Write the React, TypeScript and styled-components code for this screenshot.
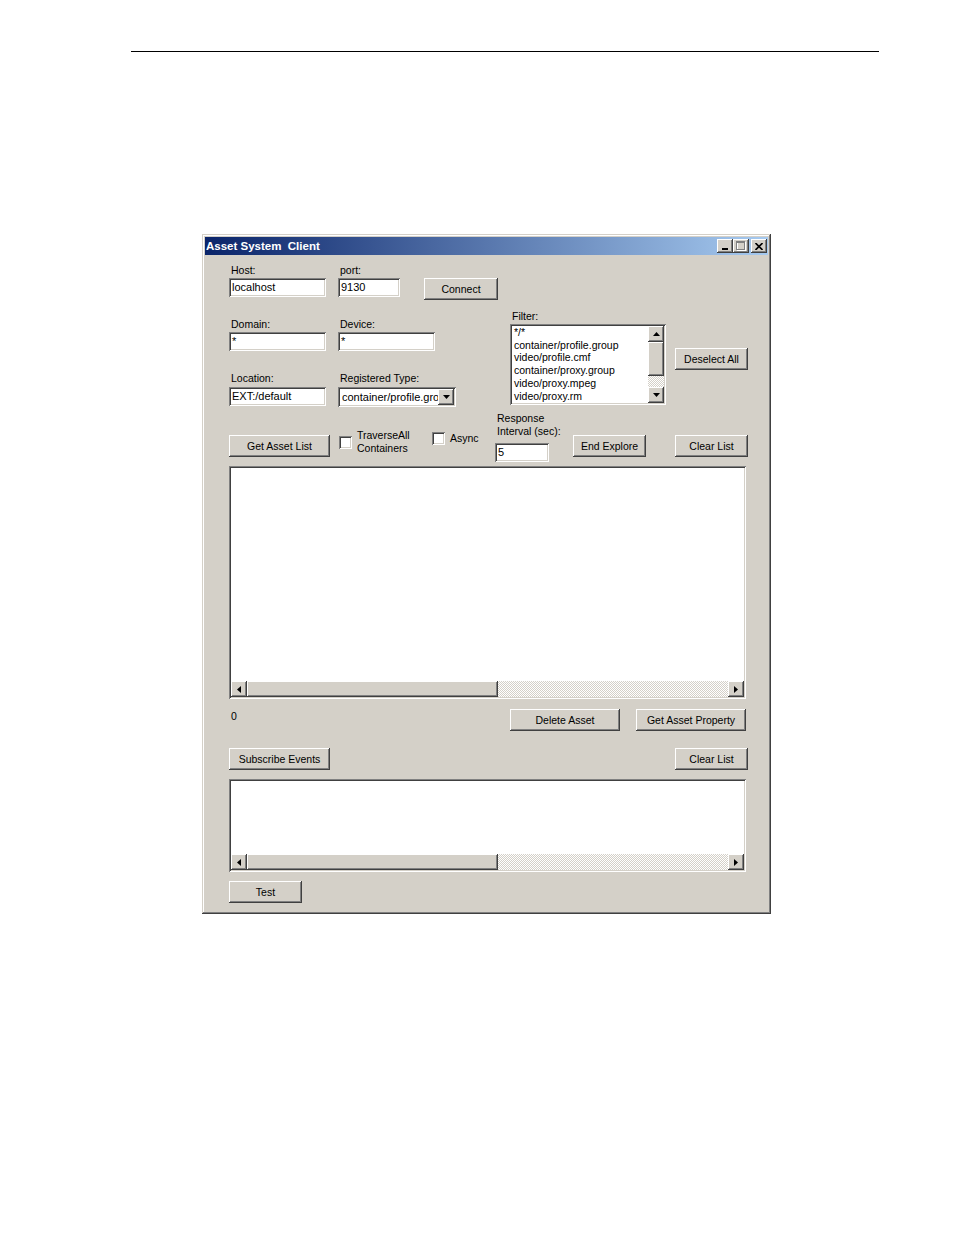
import React from "react";
import styled, { createGlobalStyle } from "styled-components";

const GlobalStyle = createGlobalStyle`
  body {
    margin: 0;
    background: #ffffff;
    font-family: "Liberation Sans", Arial, sans-serif;
  }
`;

const raised =
  "inset -1px -1px #404040, inset 1px 1px #ffffff, inset -2px -2px #808080, inset 2px 2px #d4d0c8";
const sunken =
  "inset 1px 1px #808080, inset -1px -1px #ffffff, inset 2px 2px #404040, inset -2px -2px #d4d0c8";

const Page = styled.div`
  width: 954px;
  height: 1235px;
  padding-top: 51px;
  box-sizing: border-box;
`;

const Rule = styled.div`
  margin-left: 131px;
  width: 748px;
  height: 1px;
  background: #000000;
`;

const Window = styled.div`
  margin: 182px 0 0 202px;
  width: 569px;
  height: 680px;
  box-sizing: border-box;
  padding: 3px;
  background: #d4d0c8;
  box-shadow: inset -1px -1px #404040, inset 1px 1px #d4d0c8,
    inset -2px -2px #808080, inset 2px 2px #ffffff;
  display: flex;
  flex-direction: column;
`;

const TitleBar = styled.div`
  height: 18px;
  display: flex;
  align-items: center;
  padding: 0 1px 0 1px;
  background: linear-gradient(to right, #0a246a, #a6caf0);
`;

const TitleText = styled.span`
  flex: 1;
  color: #ffffff;
  font-weight: bold;
  font-size: 11.5px;
  line-height: 14px;
  padding-bottom: 1px;
  white-space: pre;
`;

const CaptionButton = styled.div<{ $ml?: number }>`
  width: 16px;
  height: 14px;
  margin-left: ${(p) => p.$ml ?? 0}px;
  background: #d4d0c8;
  box-shadow: ${raised};
  display: flex;
  align-items: center;
  justify-content: center;
`;

const Body = styled.div`
  flex: 1;
  padding: 9px 20px 0 24px;
  display: flex;
  flex-direction: column;
  font-size: 10.5px;
  color: #000000;
`;

const TopArea = styled.div`
  display: flex;
  align-items: flex-start;
`;

const LeftCol = styled.div`
  display: flex;
  flex-direction: column;
`;

const FieldRow = styled.div<{ $h?: number }>`
  display: flex;
  align-items: flex-start;
  height: ${(p) => (p.$h ? `${p.$h}px` : "auto")};
`;

const Field = styled.div<{ $w: number; $ml?: number; $mt?: number }>`
  width: ${(p) => p.$w}px;
  margin-left: ${(p) => p.$ml ?? 0}px;
  margin-top: ${(p) => p.$mt ?? 0}px;
  display: flex;
  flex-direction: column;
`;

const Label = styled.div<{ $h?: number }>`
  height: ${(p) => p.$h ?? 14}px;
  line-height: 13px;
  padding-left: 2px;
  white-space: nowrap;
`;

const TextBox = styled.div<{ $h?: number }>`
  height: ${(p) => p.$h ?? 19}px;
  box-sizing: border-box;
  background: #ffffff;
  box-shadow: ${sunken};
  padding: 2px 3px 0 3px;
  font-size: 11px;
  line-height: 15px;
  white-space: nowrap;
  overflow: hidden;
`;

const Combo = styled.div`
  height: 20px;
  box-sizing: border-box;
  background: #ffffff;
  box-shadow: ${sunken};
  padding: 2px;
  display: flex;
`;

const ComboText = styled.div`
  flex: 1;
  padding: 1px 0 0 2px;
  font-size: 11px;
  line-height: 15px;
  white-space: nowrap;
  overflow: hidden;
`;

const Button = styled.div<{ $w: number; $ml?: number; $mt?: number; $mr?: number }>`
  width: ${(p) => p.$w}px;
  height: 22px;
  margin-left: ${(p) => p.$ml ?? 0}px;
  margin-top: ${(p) => p.$mt ?? 0}px;
  margin-right: ${(p) => p.$mr ?? 0}px;
  flex-shrink: 0;
  box-sizing: border-box;
  background: #d4d0c8;
  box-shadow: ${raised};
  display: flex;
  align-items: center;
  justify-content: center;
  white-space: nowrap;
`;

const ArrowBox = styled.div<{ $h?: number }>`
  width: 16px;
  height: ${(p) => p.$h ?? 16}px;
  flex-shrink: 0;
  box-sizing: border-box;
  background: #d4d0c8;
  box-shadow: ${raised};
  display: flex;
  align-items: center;
  justify-content: center;
`;

const RightCol = styled.div`
  margin-left: 12px;
  margin-top: 46px;
  display: flex;
  flex-direction: column;
`;

const FilterRow = styled.div`
  display: flex;
  align-items: flex-start;
`;

const ListBox = styled.div<{ $w: number; $h: number; $column?: boolean }>`
  width: ${(p) => p.$w}px;
  height: ${(p) => p.$h}px;
  box-sizing: border-box;
  padding: 2px;
  background: #ffffff;
  box-shadow: ${sunken};
  display: flex;
  flex-direction: ${(p) => (p.$column ? "column" : "row")};
`;

const ListItems = styled.div`
  flex: 1;
  padding: 0 2px;
  line-height: 12.7px;
  white-space: nowrap;
  overflow: hidden;
`;

const ListArea = styled.div`
  flex: 1;
`;

const VScroll = styled.div`
  width: 16px;
  display: flex;
  flex-direction: column;
`;

const HScroll = styled.div`
  height: 16px;
  display: flex;
`;

const Thumb = styled.div<{ $w?: number; $h?: number }>`
  width: ${(p) => (p.$w ? `${p.$w}px` : "auto")};
  height: ${(p) => (p.$h ? `${p.$h}px` : "auto")};
  flex-shrink: 0;
  box-sizing: border-box;
  background: #d4d0c8;
  box-shadow: ${raised};
`;

const Track = styled.div`
  flex: 1;
  background: repeating-conic-gradient(#d4d0c8 0% 25%, #ffffff 0% 50%) 0 0 /
    2px 2px;
`;

const ActionRow = styled.div<{ $mt: number; $h?: number }>`
  display: flex;
  align-items: flex-start;
  margin-top: ${(p) => p.$mt}px;
  height: ${(p) => (p.$h ? `${p.$h}px` : "auto")};
`;

const CheckGroup = styled.div<{ $w: number; $ml?: number; $mt: number }>`
  width: ${(p) => p.$w}px;
  margin-left: ${(p) => p.$ml ?? 0}px;
  margin-top: ${(p) => p.$mt}px;
  display: flex;
  align-items: center;
  gap: 5px;
`;

const CheckBox = styled.div`
  width: 13px;
  height: 13px;
  flex-shrink: 0;
  box-sizing: border-box;
  background: #ffffff;
  box-shadow: ${sunken};
`;

const CheckLabel = styled.div`
  line-height: 13px;
  white-space: nowrap;
`;

const Spacer = styled.div`
  flex: 1;
  padding: 1px 0 0 2px;
  line-height: 13px;
`;

const Arrow: React.FC<{ dir: "up" | "down" | "left" | "right" }> = ({ dir }) => {
  const pts = {
    up: "3.5,0 7,4 0,4",
    down: "0,0 7,0 3.5,4",
    left: "4,0 4,7 0,3.5",
    right: "0,0 4,3.5 0,7",
  }[dir];
  const vertical = dir === "up" || dir === "down";
  return (
    <svg width={vertical ? 7 : 4} height={vertical ? 4 : 7} viewBox={vertical ? "0 0 7 4" : "0 0 4 7"}>
      <polygon points={pts} fill="#000000" />
    </svg>
  );
};

const HScrollBar: React.FC = () => (
  <HScroll>
    <ArrowBox>
      <Arrow dir="left" />
    </ArrowBox>
    <Thumb $w={251} />
    <Track />
    <ArrowBox>
      <Arrow dir="right" />
    </ArrowBox>
  </HScroll>
);

const filters = [
  "*/*",
  "container/profile.group",
  "video/profile.cmf",
  "container/proxy.group",
  "video/proxy.mpeg",
  "video/proxy.rm",
];

const App: React.FC = () => {
  return (
    <Page>
      <GlobalStyle />
      <Rule />
      <Window>
        <TitleBar>
          <TitleText>{"Asset System  Client"}</TitleText>
          <CaptionButton>
            <svg width="8" height="8" viewBox="0 0 8 8">
              <rect x="1" y="6" width="6" height="2" fill="#000000" />
            </svg>
          </CaptionButton>
          <CaptionButton>
            <svg width="10" height="10" viewBox="0 0 10 10">
              <rect x="1.5" y="1.5" width="8" height="8" fill="none" stroke="#ffffff" />
              <rect x="0.5" y="0.5" width="8" height="8" fill="none" stroke="#808080" />
              <rect x="0" y="0" width="9" height="2" fill="#808080" />
            </svg>
          </CaptionButton>
          <CaptionButton $ml={2}>
            <svg width="8" height="7" viewBox="0 0 8 7">
              <path d="M0.5 0 L7.5 7 M7.5 0 L0.5 7" stroke="#000000" strokeWidth="1.6" />
            </svg>
          </CaptionButton>
        </TitleBar>

        <Body>
          <TopArea>
            <LeftCol>
              <FieldRow $h={54}>
                <Field $w={97}>
                  <Label>Host:</Label>
                  <TextBox>localhost</TextBox>
                </Field>
                <Field $w={62} $ml={12}>
                  <Label>port:</Label>
                  <TextBox>9130</TextBox>
                </Field>
                <Button $w={74} $ml={24} $mt={14}>
                  Connect
                </Button>
              </FieldRow>
              <FieldRow $h={54}>
                <Field $w={97}>
                  <Label>Domain:</Label>
                  <TextBox>*</TextBox>
                </Field>
                <Field $w={97} $ml={12}>
                  <Label>Device:</Label>
                  <TextBox>*</TextBox>
                </Field>
              </FieldRow>
              <FieldRow>
                <Field $w={97}>
                  <Label $h={15}>Location:</Label>
                  <TextBox>EXT:/default</TextBox>
                </Field>
                <Field $w={118} $ml={12}>
                  <Label $h={15}>Registered Type:</Label>
                  <Combo>
                    <ComboText>container/profile.group</ComboText>
                    <ArrowBox>
                      <Arrow dir="down" />
                    </ArrowBox>
                  </Combo>
                </Field>
              </FieldRow>
            </LeftCol>

            <RightCol>
              <Label>Filter:</Label>
              <FilterRow>
                <ListBox $w={156} $h={81}>
                  <ListItems>
                    {filters.map((f) => (
                      <div key={f}>{f}</div>
                    ))}
                  </ListItems>
                  <VScroll>
                    <ArrowBox>
                      <Arrow dir="up" />
                    </ArrowBox>
                    <Thumb $h={34} />
                    <Track />
                    <ArrowBox>
                      <Arrow dir="down" />
                    </ArrowBox>
                  </VScroll>
                </ListBox>
                <Button $w={73} $ml={9} $mt={24}>
                  Deselect All
                </Button>
              </FilterRow>
            </RightCol>
          </TopArea>

          <ActionRow $mt={5} $h={50}>
            <Button $w={101} $mt={23}>
              Get Asset List
            </Button>
            <CheckGroup $w={93} $ml={9} $mt={17}>
              <CheckBox />
              <CheckLabel>
                TraverseAll
                <br />
                Containers
              </CheckLabel>
            </CheckGroup>
            <CheckGroup $w={63} $mt={20}>
              <CheckBox />
              <CheckLabel>Async</CheckLabel>
            </CheckGroup>
            <Field $w={54}>
              <Label $h={31}>
                Response
                <br />
                Interval (sec):
              </Label>
              <TextBox>5</TextBox>
            </Field>
            <Button $w={73} $ml={24} $mt={23}>
              End Explore
            </Button>
            <Button $w={73} $ml={29} $mt={23}>
              Clear List
            </Button>
          </ActionRow>

          <ActionRow $mt={4}>
            <ListBox $w={517} $h={233} $column>
              <ListArea />
              <HScrollBar />
            </ListBox>
          </ActionRow>

          <ActionRow $mt={10} $h={22}>
            <Spacer>0</Spacer>
            <Button $w={110}>Delete Asset</Button>
            <Button $w={110} $ml={16} $mr={2}>
              Get Asset Property
            </Button>
          </ActionRow>

          <ActionRow $mt={17} $h={22}>
            <Button $w={101}>Subscribe Events</Button>
            <Spacer />
            <Button $w={73}>Clear List</Button>
          </ActionRow>

          <ActionRow $mt={9}>
            <ListBox $w={517} $h={93} $column>
              <ListArea />
              <HScrollBar />
            </ListBox>
          </ActionRow>

          <ActionRow $mt={9}>
            <Button $w={73}>Test</Button>
          </ActionRow>
        </Body>
      </Window>
    </Page>
  );
};

export default App;
